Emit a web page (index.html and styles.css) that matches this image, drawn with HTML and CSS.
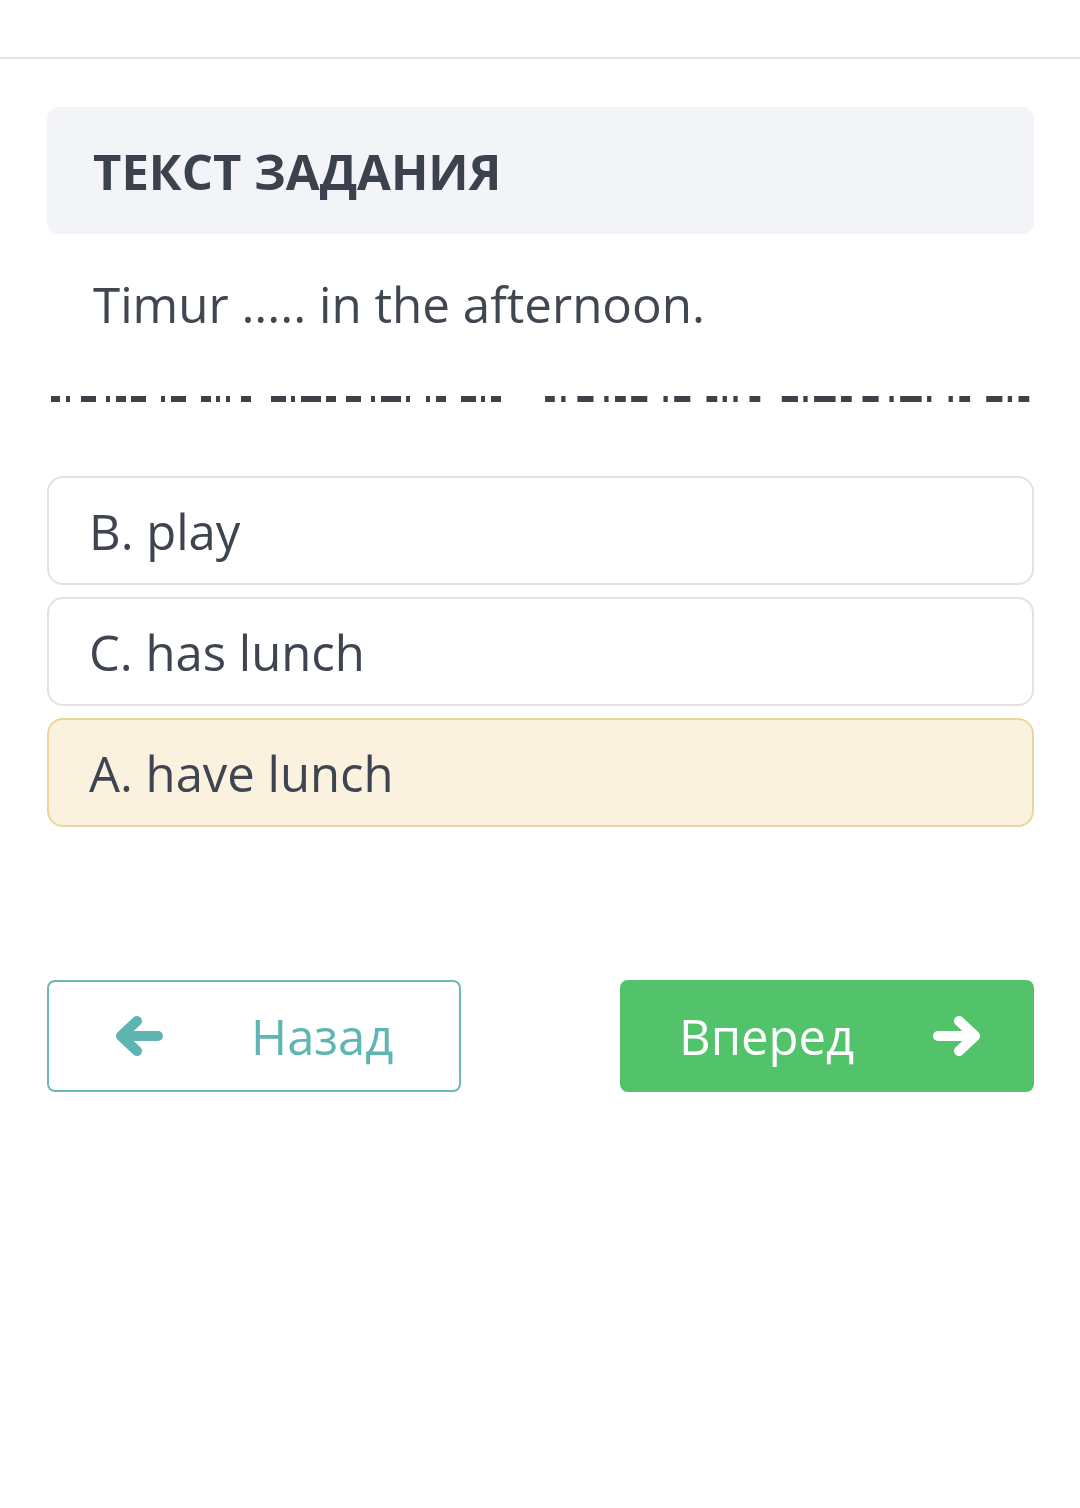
FILE: index.html
```html
<!DOCTYPE html>
<html lang="ru">
<head>
  <meta charset="UTF-8">
  <title>Текст задания</title>
  <link rel="stylesheet" href="styles.css">
</head>
<body>

  <div class="topbar"></div>

  <div class="container">
    <div class="task-header">
      <h2>ТЕКСТ ЗАДАНИЯ</h2>
    </div>

    <p class="question">Timur ..... in the afternoon.</p>

    <div class="cut-line">
      <svg width="980" height="6" viewBox="0 0 980 6">
        <g id="half" fill="#3d4249">
          <rect x="1" y="0" width="9" height="6"/>
          <rect x="16" y="0" width="4" height="6"/>
          <rect x="31" y="0" width="15" height="6"/>
          <rect x="56" y="0" width="4" height="6"/>
          <rect x="66" y="0" width="10" height="6"/>
          <rect x="81" y="0" width="15" height="6"/>
          <rect x="111" y="0" width="4" height="6"/>
          <rect x="121" y="0" width="15" height="6"/>
          <rect x="151" y="0" width="10" height="6"/>
          <rect x="166" y="0" width="4" height="6"/>
          <rect x="176" y="0" width="4" height="6"/>
          <rect x="191" y="0" width="10" height="6"/>
          <rect x="221" y="0" width="15" height="6"/>
          <rect x="241" y="0" width="4" height="6"/>
          <rect x="251" y="0" width="20" height="6"/>
          <rect x="276" y="0" width="10" height="6"/>
          <rect x="296" y="0" width="15" height="6"/>
          <rect x="321" y="0" width="4" height="6"/>
          <rect x="331" y="0" width="20" height="6"/>
          <rect x="356" y="0" width="4" height="6"/>
          <rect x="376" y="0" width="4" height="6"/>
          <rect x="386" y="0" width="10" height="6"/>
          <rect x="411" y="0" width="15" height="6"/>
          <rect x="431" y="0" width="4" height="6"/>
          <rect x="441" y="0" width="10" height="6"/>
        </g>
        <use href="#half" transform="translate(494 0) scale(1.076 1)"/>
      </svg>
    </div>

    <div class="options">
      <div class="option">B. play</div>
      <div class="option">C. has lunch</div>
      <div class="option selected">A. have lunch</div>
    </div>

    <div class="nav">
      <button class="btn btn-back">
        <svg class="arrow" width="48" height="40" viewBox="0 0 48 40">
          <path d="M22 5 L6 20 L22 35 M6 20 L43 20" fill="none" stroke="currentColor" stroke-width="10" stroke-linecap="round" stroke-linejoin="round"/>
        </svg>
        <span>Назад</span>
      </button>
      <button class="btn btn-next">
        <span>Вперед</span>
        <svg class="arrow" width="48" height="40" viewBox="0 0 48 40">
          <path d="M26 5 L42 20 L26 35 M42 20 L5 20" fill="none" stroke="currentColor" stroke-width="10" stroke-linecap="round" stroke-linejoin="round"/>
        </svg>
      </button>
    </div>
  </div>

</body>
</html>
```

FILE: styles.css
```css
* {
  box-sizing: border-box;
}

body {
  margin: 0;
  padding: 0;
  font-family: 'Open Sans', 'Noto Sans', sans-serif;
  background: #fff;
  color: #3d434d;
}

.topbar {
  height: 59px;
  border-bottom: 2px solid #e4e4e4;
}

.container {
  padding: 0 46px 0 47px;
}

.task-header {
  margin-top: 48px;
  height: 127px;
  background: #f3f4f7;
  border-radius: 12px;
  padding-left: 46px;
  display: flex;
  align-items: center;
}

.task-header h2 {
  margin: 0;
  font-size: 49px;
  font-weight: 700;
  color: #3b424e;
}

.question {
  margin: 36px 0 0;
  padding-left: 46px;
  font-size: 49.3px;
  line-height: 68px;
  color: #414751;
}

.cut-line {
  margin-top: 58px;
  padding-left: 3px;
  height: 6px;
  display: flex;
}

.options {
  margin-top: 74px;
  display: flex;
  flex-direction: column;
  gap: 12px;
}

.option {
  height: 109px;
  border: 2px solid #e2e2e2;
  border-radius: 16px;
  padding-left: 40px;
  display: flex;
  align-items: center;
  font-size: 49px;
  color: #3f4550;
}

.option.selected {
  background: #faf2df;
  border-color: #ebd59e;
}

.nav {
  margin-top: 153px;
  display: flex;
  justify-content: space-between;
}

.btn {
  width: 414px;
  height: 112px;
  border-radius: 8px;
  display: flex;
  align-items: center;
  font-family: 'Open Sans', 'Noto Sans', sans-serif;
  font-size: 49px;
  cursor: pointer;
}

.btn-back {
  background: #fff;
  border: 2px solid #6cb8b5;
  color: #5eb5b1;
  padding-left: 66px;
  gap: 88px;
}

.btn-next {
  background: #52c26b;
  border: none;
  color: #fff;
  padding-left: 59px;
  gap: 79px;
}

.arrow {
  flex-shrink: 0;
}
```
